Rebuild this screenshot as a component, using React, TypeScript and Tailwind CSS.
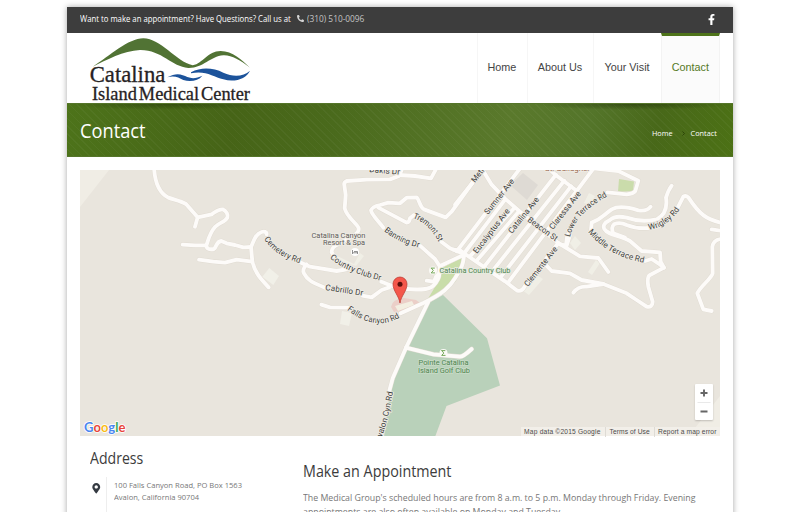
import React from "react";
import { FaFacebookF, FaPhoneAlt, FaMapMarkerAlt } from "react-icons/fa";

type Sheet = { at: string; roads: string[] };

const sheets: Sheet[] = [
  {
    at: "translate(80 165) scale(.33333)",
    roads: [
      "M222 5C224 55 240 85 265 98C285 105 302 108 318 117L353 157L345 185",
      "M353 157L395 148C410 138 415 132 428 133C440 138 445 150 442 158C435 172 418 172 405 186C388 205 385 225 379 242C380 253 390 254 402 252C412 242 408 230 424 228L440 235L465 240L490 247L513 246",
      "M308 239L345 241L378 241",
      "M357 284L400 290L435 293L470 284L517 290",
      "M560 208C560 200 552 199 545 201C525 207 520 232 513 246L517 290C525 325 545 345 566 367",
    ],
  },
  {
    at: "translate(300 165) scale(.33333)",
    roads: [
      "M305 15L297 33L270 43L200 44L140 48Q131 52 133 60L137 90L134 130C142 160 172 175 176 190Q178 202 160 212L110 240Q94 250 95 262L102 274",
      "M297 30L345 33L393 40L412 5",
      "M244 350C270 360 285 368 310 371C350 375 385 377 400 362C412 350 418 340 418 325L420 305L405 282L360 242",
      "M250 188C235 168 215 150 213 136Q217 125 240 120L265 113L300 115L320 98L350 97C360 108 358 125 372 133L437 157L455 140L520 50",
      "M235 128L320 173Q328 172 330 160L342 150",
      "M424 230L450 250L495 268",
      "M495 268L420 303",
      "M0 292L30 305L110 318Q140 314 148 310",
      "M20 298Q5 315 12 325C22 345 35 352 75 368",
      "M187 392L215 397L245 375L268 367",
      "M418 325L408 335L402 350L380 347",
      "M492 272Q490 300 480 315L465 340C450 365 430 385 370 414L302 445",
      "M64 419L90 427L143 428",
    ],
  },
  {
    at: "translate(455 168) scale(.33333)",
    roads: [
      "M-5 245L15 247L30 258",
      "M5 250L196 0",
      "M0 110L52 45",
      "M85 9L110 50L150 92L215 148L310 225L375 265L430 270L460 312",
      "M28 255L150 95",
      "M45 265L178 120",
      "M66 277L192 130",
      "M90 293L303 20",
      "M113 308L328 38",
      "M138 326L348 55",
      "M162 340L415 2",
      "M30 258L150 340L187 368Q200 372 210 354L310 225",
      "M288 8L303 22L365 68",
    ],
  },
  {
    at: "translate(510 165) scale(.33333)",
    roads: [
      "M250 10L325 18L385 47L376 78Q370 86 350 88L292 82",
      "M172 210L168 240",
      "M150 238L170 242L180 210L175 195",
      "M422 125Q410 140 385 136C350 125 325 122 305 133C280 150 275 162 245 173L243 195",
      "M485 62Q475 75 468 98C472 125 465 150 440 163C400 172 370 165 350 158Q315 150 300 165Q275 177 283 192C295 212 330 210 360 228L395 258L450 262L452 290L462 308L420 330Q410 335 415 365L428 410Q427 429 410 425L380 405L350 385L280 357L215 345L180 325L125 318L103 295",
      "M405 288L425 282L445 295L462 308",
      "M345 218L310 205Q302 188 312 178Q330 170 350 180Q380 192 415 189",
      "M502 130L520 95Q527 90 535 97C570 150 590 163 632 173",
      "M605 193L632 197",
      "M632 222Q610 225 607 245L608 325C605 340 570 365 562 385L580 433L605 438",
      "M190 383Q205 363 230 365L280 357",
    ],
  },
  {
    at: "translate(300 300) scale(.33333)",
    roads: [
      "M385 5L318 143L278 235L268 272",
      "M318 143L400 163L480 170Q490 170 515 147",
    ],
  },
];

type Label = { id: string; d: string; text: string; len: number };

// Street names follow their own baseline curve.
const labels: Label[] = [
  { id: "cem", d: "M264 239Q275 256 302 264", text: "Cemetery Rd", len: 44 },
  { id: "ccd", d: "M330 258Q345 272 382 281", text: "Country Club Dr", len: 56 },
  { id: "cab", d: "M325 290Q345 293 364 296", text: "Cabrillo Dr", len: 38 },
  { id: "ban", d: "M384 231Q398 243 420 248", text: "Banning Dr", len: 39 },
  { id: "tre", d: "M413 218Q430 224 439 243", text: "Tremont St", len: 36 },
  { id: "fal", d: "M347 310Q377 333 402 316", text: "Falls Canyon Rd", len: 57 },
  { id: "ava", d: "M380 442Q389 420 393 391", text: "Avalon Cyn Rd", len: 52 },
  { id: "os", d: "M369 172L402 175", text: "Dakis Dr", len: 31 },
  { id: "met", d: "M475 183L499 152", text: "Metropole", len: 36 },
  { id: "sum", d: "M488 215L515 181", text: "Sumner Ave", len: 43 },
  { id: "euc", d: "M477 254L511 210", text: "Eucalyptus Ave", len: 54 },
  { id: "cat", d: "M512 234L540 199", text: "Catalina Ave", len: 44 },
  { id: "cla", d: "M553 230L582 193", text: "Claressa Ave", len: 46 },
  { id: "bea", d: "M527 221L556 242", text: "Beacon St", len: 35 },
  { id: "cle", d: "M528 287L558 249", text: "Clemente Ave", len: 48 },
  { id: "low", d: "M570 237Q575 213 610 195", text: "Lower Terrace Rd", len: 57 },
  { id: "mid", d: "M588 232Q607 256 645 263", text: "Middle Terrace Rd", len: 65 },
  { id: "wri", d: "M649 230Q670 226 681 207", text: "Wrigley Rd", len: 38 },
];

function Roads({ color, width }: { color: string; width: number }) {
  return (
    <g fill="none" stroke={color} strokeWidth={width} strokeLinecap="round" strokeLinejoin="round">
      {sheets.map((s) => (
        <g key={s.at} transform={s.at}>
          {s.roads.map((d) => (
            <path key={d} d={d} />
          ))}
        </g>
      ))}
    </g>
  );
}

function Golfer({ x, y }: { x: number; y: number }) {
  return (
    <g transform={`translate(${x} ${y})`}>
      <circle r="4" fill="#fbfaf6" />
      <path d="M-2.2 -2.4H1.8M-1.6 -2.4L.3 .1L-1.8 2.4H2" fill="none" stroke="#68a04b" strokeWidth=".9" />
    </g>
  );
}

function Map() {
  return (
    <svg className="block h-full w-full" viewBox="80 170 640 266.5" preserveAspectRatio="none">
      <rect x="80" y="170" width="640" height="267" fill="#e9e5dd" />
      <path d="M80 170H109L80 207ZM720 396V437H688Z" fill="#f0ede5" />
      <path d="M269.3 268L279 276L273.3 285L262.3 276.7ZM342 311L352 313L349 326L340 324Z" fill="#f1f0e8" />
      <path d="M523 173L538 185L527 200L510 185Z" fill="#dedad4" />
      <path d="M619 179L634 181.500L633 191L618 192Z" fill="#cadcab" />
      <path d="M584 203L589 193L595 196L590 205ZM570 243L575 236L581 243L575 250ZM588 272L596 260L600 263L592 275ZM522 290L535 274L543 279L529 295ZM337 256L354 264L360 253L364 256L356 266L335 259Z" fill="#f0efe6" />
      <path d="M391 307Q392 299 404 298L416 300L420 303L412 310L394 312Z" fill="#ebcfc8" />
      <path d="M395 306L412 301L414 305L398 311Z" fill="#f3efe2" />
      <path d="M463 257L442 268L438 282L426 302L440 296L456 281Z" fill="#c9dda9" />
      <path d="M443 295L487 338.300L500 385.500L446.500 406L435 437H384L391 383L407 345L427 304Z" fill="#b9d1ba" />
      <Roads color="#e0dbd2" width={14} />
      <Roads color="#fdfbf9" width={11.5} />
      <g
        fontFamily="Roboto, 'Liberation Sans', sans-serif"
        fontSize="8.200"
        fill="#403e3c"
        stroke="#eeebe4"
        strokeWidth="1.800"
        strokeLinejoin="round"
        paintOrder="stroke"
      >
        {labels.map((l) => (
          <React.Fragment key={l.id}>
            <path id={l.id} d={l.d} fill="none" stroke="none" />
            <text>
              <textPath href={`#${l.id}`} textLength={l.len} lengthAdjust="spacingAndGlyphs">
                {l.text}
              </textPath>
            </text>
          </React.Fragment>
        ))}
        <text x="545" y="170.800" fill="#9c6a50" fontSize="7.500" textLength="45" lengthAdjust="spacingAndGlyphs">St. Gallagher</text>
        <g fill="#5f5c5a" fontSize="7.800">
          <text x="311.500" y="238" textLength="54" lengthAdjust="spacingAndGlyphs">Catalina Canyon</text>
          <text x="323" y="245.300" textLength="42" lengthAdjust="spacingAndGlyphs">Resort &amp; Spa</text>
        </g>
        <g fill="#4f8550" stroke="#e7ebdf" fontSize="7.800">
          <text x="439.500" y="273.300" textLength="71" lengthAdjust="spacingAndGlyphs">Catalina Country Club</text>
          <g stroke="#c6dac5">
            <text x="418.500" y="365.200" textLength="50" lengthAdjust="spacingAndGlyphs">Pointe Catalina</text>
            <text x="418" y="372.700" textLength="52" lengthAdjust="spacingAndGlyphs">Island Golf Club</text>
          </g>
        </g>
      </g>
      <circle cx="355" cy="252" r="4" fill="#fff" />
      <path d="M352.500 250V254M352.500 252.800H357.500V254M354 251.500H357.500V253" stroke="#777" strokeWidth=".8" fill="none" />
      <Golfer x={433} y={270.500} />
      <Golfer x={443.500} y={353} />
      <path d="M400 303C399 296 393 291 393 284A7 7 0 0 1 407 284C407 291 401 296 400 303Z" fill="#f4574b" stroke="#b8352c" strokeWidth=".7" />
      <circle cx="400" cy="284.300" r="2.500" fill="#5b100c" />
      <text x="84" y="431.500" fontFamily="Lato, sans-serif" fontSize="13.800" fontWeight="700" textLength="41.500" lengthAdjust="spacingAndGlyphs" stroke="#fff" strokeWidth="1.600" paintOrder="stroke">
        <tspan fill="#4a86f0">G</tspan>
        <tspan fill="#e8453a">o</tspan>
        <tspan fill="#f8bb16">o</tspan>
        <tspan fill="#4a86f0">g</tspan>
        <tspan fill="#3ba757">l</tspan>
        <tspan fill="#e8453a">e</tspan>
      </text>
    </svg>
  );
}

function Logo() {
  return (
    <svg className="mt-[2px] ml-[13.300px] h-[67.500px] w-[180px]" viewBox="0 0 540 202.500">
      <path d="M38 95C90 62 145 10 190 10C242 10 288 80 338 91C370 85 382 48 422 48C458 48 485 75 510 98C480 75 455 60 430 61C390 64 370 100 325 99C275 95 245 44 180 45C130 47 80 75 38 95Z" fill="#517334" />
      <path d="M333 112C365 95 400 99 430 113C460 127 490 125 510 107C500 130 465 144 430 133C400 125 375 105 333 115Z" fill="#1c539b" />
      <path d="M262 127C290 111 307 119 322 126C337 132 350 130 367 122C355 138 330 142 310 135C295 128 285 121 262 127Z" fill="#1c539b" />
      <g fontFamily="'Liberation Serif', serif" fill="#262223" stroke="#262223" strokeWidth=".9">
        <text x="29" y="142" fontSize="69" textLength="227" lengthAdjust="spacingAndGlyphs">Catalina</text>
        <text x="36" y="196" fontSize="56" wordSpacing="-8" textLength="474" lengthAdjust="spacingAndGlyphs">Island Medical Center</text>
      </g>
    </svg>
  );
}

const nav = [
  { name: "Home", box: "w-[50.500px]" },
  { name: "About Us", box: "w-[66px]" },
  { name: "Your Visit", box: "w-[68px]" },
];

export default function App() {
  return (
    <div className="h-[512px] overflow-hidden bg-white pt-[6.670px] font-['Open_Sans','Noto_Sans',sans-serif]">
      <div className="mx-auto h-[560px] w-[666.670px] bg-white shadow-[0_0_6px_rgba(0,0,0,0.35)]">
        <div className="flex h-[26.600px] items-center justify-between bg-[#3d3d3d] pr-[16px] pb-[2px] pl-[13.300px] text-[8.500px] text-white">
          <div className="flex items-center whitespace-nowrap">
            <span className="w-[211px]">
              <span className="inline-block origin-left scale-x-[0.912]">Want to make an appointment? Have Questions? Call us at</span>
            </span>
            <FaPhoneAlt className="ml-[6px] size-[7px] -scale-x-100 rotate-90 text-[#d5d5d5]" />
            <span className="ml-[3.500px] inline-block origin-left scale-x-[0.980] text-[#c4c4c4]">(310) 510-0096</span>
          </div>
          <FaFacebookF className="mt-[2px] size-[11px]" />
        </div>
        <header className="flex h-[70px] justify-between bg-white">
          <Logo />
          <nav className="mr-[13.800px] flex font-['Liberation_Sans',sans-serif] text-[10.800px] text-[#444]">
            {nav.map((n) => (
              <a key={n.name} className={`flex items-center justify-center border-l border-[#f6f6f6] pr-px pb-[3px] ${n.box}`}>
                {n.name}
              </a>
            ))}
            <a className="flex w-[58.500px] items-center justify-center border-t-[3.500px] border-r border-l border-x-[#f3f3f3] border-t-[#4e731a] bg-[#fbfbfb] pb-[6px] text-[#55791f]">
              Contact
            </a>
          </nav>
        </header>
        <div className="relative flex h-[53.300px] items-center justify-between border-y border-[#55752a] bg-[linear-gradient(100deg,#4d731a_0%,#466417_25%,#4a6a1c_40%,#5a792c_66%,#54752a_78%,#486819_88%,#4c7115_100%)] pr-[16.500px] pl-[13.300px] text-white">
          <div className="absolute inset-0 bg-[repeating-linear-gradient(45deg,transparent_0_4.500px,rgba(255,255,255,0.035)_4.500px_5.500px)]" />
          <div className="absolute top-0 right-0 left-0 flex justify-between">
            <div className="h-[6px] w-[200px] bg-[radial-gradient(ellipse_at_top,rgba(20,35,0,0.4),transparent_70%)]" />
            <div className="h-[6px] w-[200px] bg-[radial-gradient(ellipse_at_top,rgba(20,35,0,0.45),transparent_70%)]" />
          </div>
          <h1 className="relative origin-left scale-x-[0.890] text-[20.500px]">Contact</h1>
          <div className="relative mt-[7px] flex items-center text-[7.300px]">
            <span>Home</span>
            <svg className="mr-[6px] ml-[9px] h-[5px] w-[3px]" viewBox="0 0 3 5">
              <path d="M.5 .5L2.500 2.500L.5 4.500" fill="none" stroke="#2d4508" strokeWidth="1" />
            </svg>
            <span>Contact</span>
          </div>
        </div>
        <div className="relative mx-[13.330px] mt-[13.400px] h-[266.500px]">
          <Map />
          <div className="absolute right-[7px] bottom-[16px] flex h-[36.500px] w-[18.500px] flex-col items-center justify-center rounded-[1px] bg-white shadow-[0_1px_2px_rgba(0,0,0,0.2)]">
            <svg className="h-[36px] w-[18px]" viewBox="0 0 18 36">
              <path d="M5.500 9H12.500M9 5.500V12.500M5.500 27.500H12.500" stroke="#666" strokeWidth="1.900" />
              <path d="M2.500 18.500H15.500" stroke="#e3e3e3" strokeWidth=".8" />
            </svg>
          </div>
          <div className="absolute right-0 bottom-0 flex h-[9.500px] items-center bg-[#f2efe9] font-['Liberation_Sans',sans-serif] text-[6.670px] whitespace-nowrap text-[#4c4c4c]">
            <span className="w-[84.500px] pl-[3.500px] tracking-[0.180px]">Map data ©2015 Google</span>
            <span className="w-[49px] border-l border-[#dedbd5] pl-[3.500px] tracking-[0.080px]">Terms of Use</span>
            <span className="border-l border-[#dedbd5] pr-[3.500px] pl-[3px] tracking-[0.120px]">Report a map error</span>
          </div>
        </div>
        <div className="flex whitespace-nowrap">
          <section className="ml-[23.300px] w-[213.300px]">
            <h2 className="mt-[12px] origin-left scale-x-[0.880] text-[16px] leading-[20px] text-[#3c3c3c]">Address</h2>
            <div className="mt-[9px] flex h-[60px]">
              <FaMapMarkerAlt className="mt-[6px] ml-[1px] size-[10.500px] text-[#343a42]" />
              <div className="ml-[4.500px] border-l border-[#eee] pl-[7px] text-[7.800px] leading-[11.300px] text-[#777]">
                <div className="mt-[3px] origin-left scale-x-[0.970]">
                  <p>100 Falls Canyon Road, PO Box 1563</p>
                  <p>Avalon, California 90704</p>
                </div>
              </div>
            </div>
          </section>
          <section>
            <h2 className="mt-[25px] flex text-[16px] leading-[20px] text-[#3c3c3c]">
              <span className="origin-left scale-x-[0.895]">Make an Appointment</span>
            </h2>
            <div className="mt-[9.500px] origin-left scale-x-[0.957] text-[9.200px] leading-[14px] text-[#777]">
              <p>The Medical Group's scheduled hours are from 8 a.m. to 5 p.m. Monday through Friday. Evening</p>
              <p>appointments are also often available on Monday and Tuesday.</p>
            </div>
          </section>
        </div>
      </div>
    </div>
  );
}
